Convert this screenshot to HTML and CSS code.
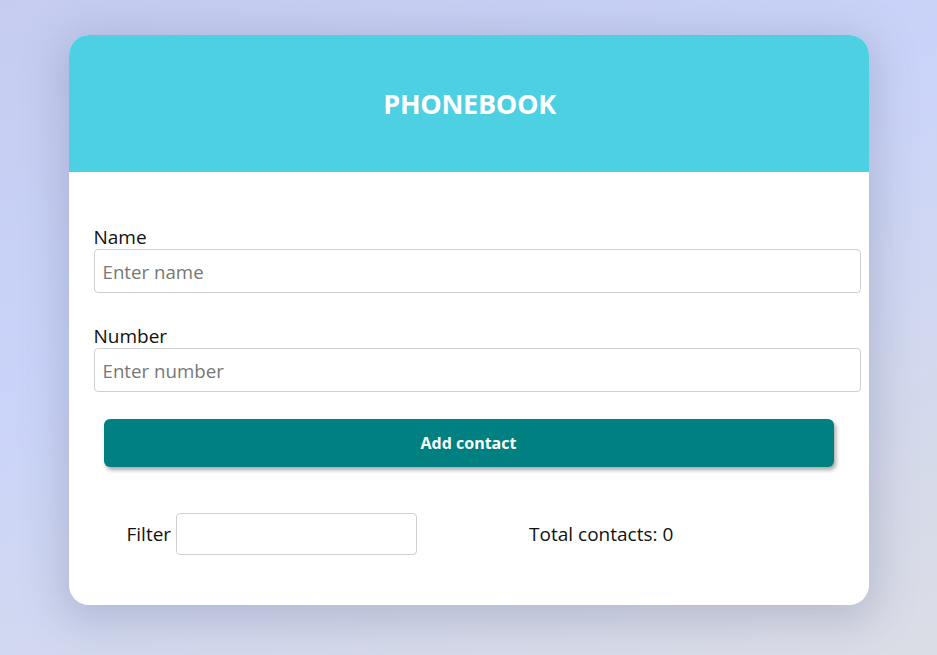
FILE: index.html
```html
<!DOCTYPE html>
<html lang="en">
<head>
<meta charset="utf-8">
<title>Phonebook</title>
<link rel="stylesheet" href="styles.css">
</head>
<body>
<div class="card">
  <header class="card-header">
    <h1 class="title">PHONEBOOK</h1>
  </header>
  <form class="form">
    <label class="label" for="name">Name</label>
    <input class="input" id="name" type="text" placeholder="Enter name">
    <label class="label label-gap" for="number">Number</label>
    <input class="input" id="number" type="tel" placeholder="Enter number">
    <button class="btn" type="button">Add contact</button>
  </form>
  <div class="filter-row">
    <div class="filter-group">
      <label class="filter-label" for="filter">Filter</label>
      <input class="filter-input" id="filter" type="text">
    </div>
    <p class="total">Total contacts: 0</p>
  </div>
</div>
</body>
</html>
```

FILE: styles.css
```css
* { box-sizing: border-box; }
html, body { margin: 0; padding: 0; }
body {
  height: 655px;
  overflow: hidden;
  font-family: "Open Sans", "Noto Sans", sans-serif;
  color: #111;
  background: linear-gradient(160deg, #c5ccef 0%, #cad4fa 40%, #d5daea 80%, #dcdee6 100%);
  padding-top: 35px;
}
.card {
  width: 800px;
  height: 570px;
  margin: 0 auto;
  background: #fff;
  border-radius: 20px;
  overflow: hidden;
  box-shadow: 0 8px 40px 8px rgba(110, 115, 150, 0.3);
}
.card-header {
  height: 137px;
  background: #4dd0e1;
  display: flex;
  align-items: center;
  justify-content: center;
}
.title {
  margin: 0;
  color: #fff;
  font-size: 27px;
  font-weight: 700;
  letter-spacing: -0.3px;
  padding-left: 2px;
}
.form {
  padding: 53px 8px 0 25px;
  display: flex;
  flex-direction: column;
}
.label {
  display: block;
  font-size: 19px;
  line-height: 24px;
  height: 24px;
}
.label-gap { margin-top: 31px; }
.input {
  width: 100%;
  height: 44px;
  border: 1px solid #cfcfcf;
  border-radius: 4px;
  padding: 0 8px;
  font-family: inherit;
  font-size: 18.7px;
  color: #111;
  outline: none;
}
.input::placeholder { color: #777; }
.btn {
  align-self: flex-start;
  margin-top: 27px;
  margin-left: 10px;
  width: 730px;
  height: 48px;
  background: #008080;
  color: #fff;
  border: none;
  border-radius: 6px;
  font-family: inherit;
  font-size: 16px;
  font-weight: 700;
  box-shadow: 2px 3px 4px rgba(0, 0, 0, 0.35);
}
.filter-row {
  display: flex;
  align-items: center;
  padding-left: 58px;
  margin-top: 46px;
  gap: 112px;
}
.filter-group {
  display: flex;
  align-items: center;
  gap: 5px;
}
.filter-label {
  font-size: 19px;
  line-height: 24px;
}
.filter-input {
  width: 241px;
  height: 42px;
  border: 1px solid #cfcfcf;
  border-radius: 4px;
  outline: none;
}
.total {
  margin: 0;
  font-size: 19px;
  line-height: 24px;
}
```
